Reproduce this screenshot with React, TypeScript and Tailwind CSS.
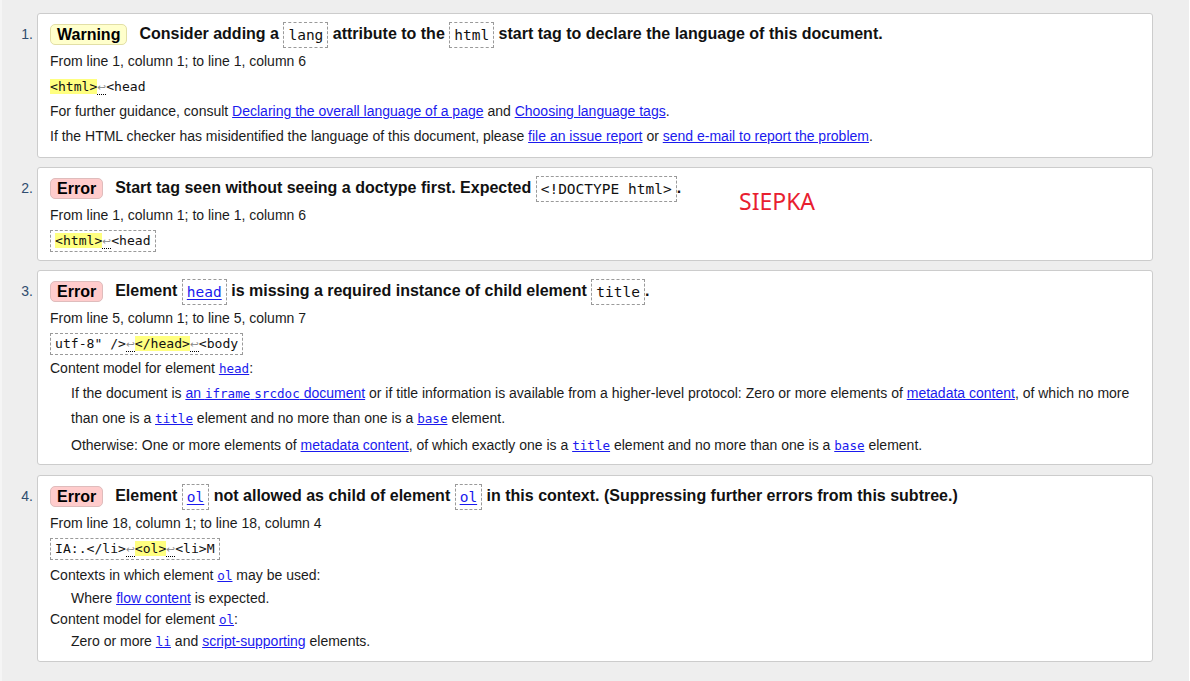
import React from 'react';

const mono = "font-['DejaVu_Sans_Mono',monospace]";

function Badge({ kind }: { kind: 'Warning' | 'Error' }) {
  const color =
    kind === 'Warning'
      ? 'bg-[#ffffcc] border-[#e2dfa6]'
      : 'bg-[#ffcccc] border-[#dfbcbc]';
  return (
    <span
      className={`inline-block shrink-0 rounded-[5px] border px-[6px] text-[16px] font-bold leading-[19px] text-black ${color}`}
    >
      {kind}
    </span>
  );
}

function Box({ children, link }: { children: React.ReactNode; link?: boolean }) {
  return (
    <span
      className={`inline-block border border-dashed border-[#9a9a9a] px-[4px] align-middle text-[14.5px] font-normal leading-[18px] py-[3px] ${mono}`}
    >
      {link ? <a className="text-[#1a1aee] underline underline-offset-2">{children}</a> : children}
    </span>
  );
}

function L({ children }: { children: React.ReactNode }) {
  return <a className="cursor-pointer text-[#1a1aee] underline">{children}</a>;
}

function LC({ children }: { children: React.ReactNode }) {
  return (
    <a className={`cursor-pointer text-[#1a1aee] underline text-[12.6px] ${mono}`}>{children}</a>
  );
}

function Hi({ children }: { children: React.ReactNode }) {
  return <span className="bg-[#ffff80]">{children}</span>;
}

function Ret() {
  return (
    <span className="inline-block border-b border-dotted border-black font-['DejaVu_Sans',sans-serif] text-[10.5px] leading-[14px] text-[#888]">
      ↩
    </span>
  );
}

function Extract({ children, boxed = true }: { children: React.ReactNode; boxed?: boolean }) {
  return (
    <div className="h-[25px] flex items-center">
      <span
        className={`inline-block text-[13.1px] leading-[20px] text-[#111] ${mono} ${
          boxed ? 'border border-dashed border-[#9a9a9a] px-[4px]' : ''
        }`}
      >
        {children}
      </span>
    </div>
  );
}

function Item({
  n,
  kind,
  title,
  children,
  pb,
  mb,
  extra,
}: {
  n: number;
  kind: 'Warning' | 'Error';
  title: React.ReactNode;
  children: React.ReactNode;
  pb: string;
  mb: string;
  extra?: React.ReactNode;
}) {
  return (
    <div className={`flex ${mb}`}>
      <div className="w-[35px] shrink-0 pr-[4px] pt-[9px] text-right text-[14px] leading-[25px] text-[#2f4d6f]">
        {n}.
      </div>
      <div
        className={`relative w-[1116px] rounded-[3px] border border-[#cccccc] bg-white pl-[12px] pr-[12px] pt-[8px] ${pb}`}
      >
        <div className="flex h-[25px] items-center">
          <Badge kind={kind} />
          <span className="ml-[12px] whitespace-nowrap text-[16px] font-bold leading-[25px] text-[#111]">
            {title}
          </span>
        </div>
        <div className="mt-[2px] text-[14px] text-[#1b1b1b]">{children}</div>
        {extra}
      </div>
    </div>
  );
}

export default function App() {
  return (
    <div className="min-h-[681px] w-full bg-[#eeeeee] font-['Liberation_Sans',Arial,sans-serif]">
      <div className="flex">
        <div className="w-[2px] shrink-0 bg-[#f5f5f5]" />
        <div className="flex-1 pt-[13px] pb-[21px]">
          <Item
            n={1}
            kind="Warning"
            pb="pb-[8px]"
            mb="mb-[9px]"
            title={
              <>
                Consider adding a <Box>lang</Box> attribute to the <Box>html</Box> start tag to
                declare the language of this document.
              </>
            }
          >
            <div className="leading-[25px]">From line 1, column 1; to line 1, column 6</div>
            <Extract boxed={false}>
              <Hi>&lt;html&gt;</Hi>
              <Ret />
              &lt;head
            </Extract>
            <div className="leading-[25px]">
              For further guidance, consult <L>Declaring the overall language of a page</L> and{' '}
              <L>Choosing language tags</L>.
            </div>
            <div className="leading-[25px]">
              If the HTML checker has misidentified the language of this document, please{' '}
              <L>file an issue report</L> or <L>send e-mail to report the problem</L>.
            </div>
          </Item>

          <Item
            n={2}
            kind="Error"
            pb="pb-[7px]"
            mb="mb-[9px]"
            title={
              <>
                Start tag seen without seeing a doctype first. Expected <Box>&lt;!DOCTYPE html&gt;</Box>.
              </>
            }
            extra={
              <div className="absolute left-[701px] top-[18px] font-['Noto_Sans',sans-serif] text-[23px] leading-[30px] text-[#e8202f]">
                SIEPKA
              </div>
            }
          >
            <div className="leading-[25px]">From line 1, column 1; to line 1, column 6</div>
            <Extract>
              <Hi>&lt;html&gt;</Hi>
              <Ret />
              &lt;head
            </Extract>
          </Item>

          <Item
            n={3}
            kind="Error"
            pb="pb-[6px]"
            mb="mb-[10px]"
            title={
              <>
                Element <Box link>head</Box> is missing a required instance of child element{' '}
                <Box>title</Box>.
              </>
            }
          >
            <div className="leading-[25px]">From line 5, column 1; to line 5, column 7</div>
            <Extract>
              utf-8" /&gt;
              <Ret />
              <Hi>&lt;/head&gt;</Hi>
              <Ret />
              &lt;body
            </Extract>
            <div className="leading-[25px]">
              Content model for element <LC>head</LC>:
            </div>
            <div className="pl-[21px]">
              <div className="leading-[25px]">
                If the document is{' '}
                <L>
                  an <span className={`text-[12.6px] ${mono}`}>iframe</span>{' '}
                  <span className={`text-[12.6px] ${mono}`}>srcdoc</span> document
                </L>{' '}
                or if title information is available from a higher-level protocol: Zero or more
                elements of <L>metadata content</L>, of which no more
                <br />
                than one is a <LC>title</LC> element and no more than one is a <LC>base</LC>{' '}
                element.
              </div>
              <div className="mt-[2px] leading-[25px]">
                Otherwise: One or more elements of <L>metadata content</L>, of which exactly one is a{' '}
                <LC>title</LC> element and no more than one is a <LC>base</LC> element.
              </div>
            </div>
          </Item>

          <Item
            n={4}
            kind="Error"
            pb="pb-[8px]"
            mb="mb-0"
            title={
              <>
                Element <Box link>ol</Box> not allowed as child of element <Box link>ol</Box> in this
                context. (Suppressing further errors from this subtree.)
              </>
            }
          >
            <div className="leading-[25px]">From line 18, column 1; to line 18, column 4</div>
            <Extract>
              IA:.&lt;/li&gt;
              <Ret />
              <Hi>&lt;ol&gt;</Hi>
              <Ret />
              &lt;li&gt;M
            </Extract>
            <div className="mt-[2px] leading-[25px]">
              Contexts in which element <LC>ol</LC> may be used:
            </div>
            <div className="pl-[21px] leading-[21px]">
              Where <L>flow content</L> is expected.
            </div>
            <div className="leading-[20px]">
              Content model for element <LC>ol</LC>:
            </div>
            <div className="pl-[21px] leading-[22px]">
              Zero or more <LC>li</LC> and <L>script-supporting</L> elements.
            </div>
          </Item>
        </div>
        <div className="w-[1px] shrink-0 bg-white" />
      </div>
    </div>
  );
}
